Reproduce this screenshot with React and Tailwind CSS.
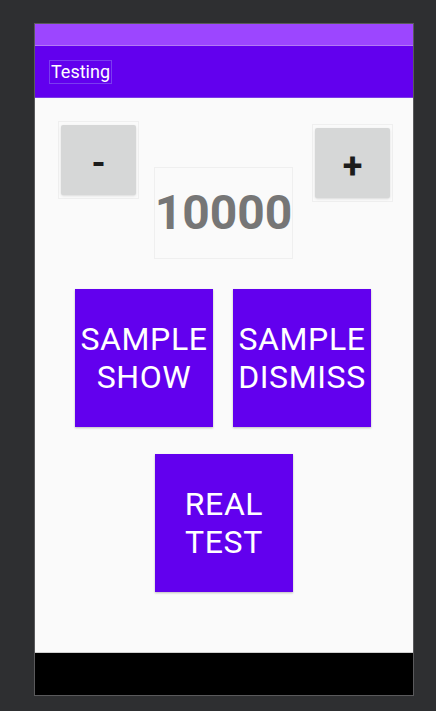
const font = { fontFamily: "Roboto, 'Liberation Sans', sans-serif" };

function StepButton({ label }) {
  return (
    <div className="border border-[#efefef] px-[2px] py-[3px]">
      <div className="flex h-[70px] w-[75px] items-center justify-center rounded-[2px] bg-[#d6d7d7] pt-[6px] text-[36px] font-bold leading-none text-[#1c1c1c] shadow-sm">
        {label}
      </div>
    </div>
  );
}

function PurpleButton({ children }) {
  return (
    <div className="flex h-[138px] w-[138px] flex-col items-center justify-center bg-[#6200ee] text-center text-[32px] leading-[38px] tracking-[0.6px] text-white shadow-[0_1px_2px_rgba(0,0,0,0.25)]">
      {children}
    </div>
  );
}

export default function App() {
  return (
    <div className="flex h-[711px] w-[436px] bg-[#2e2f31] pl-[34px] pt-[23px]" style={font}>
      <div className="flex h-[673px] w-[380px] flex-col border border-[#5a5a5c]">
        <div className="h-[22px] bg-[#9c46ff] border-b border-[#b27bf5]" />
        <div className="flex h-[52px] items-center border-b border-[#7c3ae8] bg-[#6200ee] pl-[14px]">
          <span className="border border-[#7a3cf0] px-[1px] text-[18px] leading-[22px] text-white">
            Testing
          </span>
        </div>
        <div className="flex flex-1 flex-col bg-[#fafafa]">
          <div className="flex items-start pl-[23px]">
            <div className="mt-[23px]">
              <StepButton label="-" />
            </div>
            <div className="ml-[15px] mt-[69px] flex h-[92px] w-[139px] items-center justify-center border border-[#efefef] text-[48px] font-bold text-[#767676]">
              10000
            </div>
            <div className="ml-[19px] mt-[26px]">
              <StepButton label="+" />
            </div>
          </div>
          <div className="mt-[30px] flex justify-center gap-[20px] pr-[2px]">
            <PurpleButton>
              <span>SAMPLE</span>
              <span>SHOW</span>
            </PurpleButton>
            <PurpleButton>
              <span>SAMPLE</span>
              <span>DISMISS</span>
            </PurpleButton>
          </div>
          <div className="mt-[27px] flex justify-center">
            <PurpleButton>
              <span>REAL</span>
              <span>TEST</span>
            </PurpleButton>
          </div>
        </div>
        <div className="h-[43px] border-t border-[#cfcfcf] bg-black" />
      </div>
    </div>
  );
}
